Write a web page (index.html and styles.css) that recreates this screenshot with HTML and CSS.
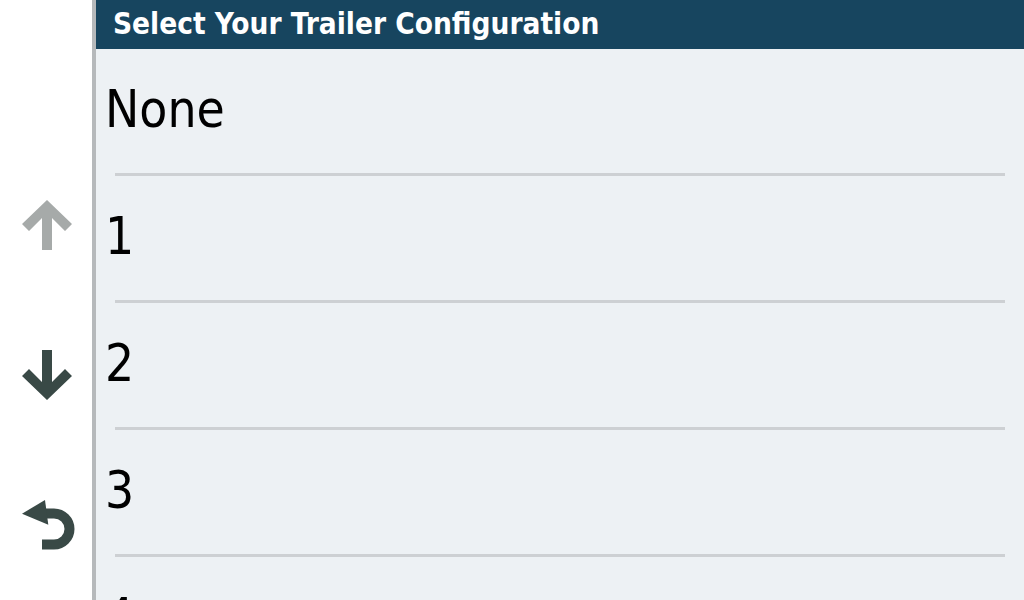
FILE: index.html
```html
<!DOCTYPE html>
<html>
<head>
<meta charset="utf-8">
<link rel="stylesheet" href="styles.css">
</head>
<body>
<div class="screen">
  <aside class="side">
    <svg class="icon" width="54" height="50" viewBox="0 0 54 50">
      <polygon class="up" points="25,0 50,24 43,31 30,18 30,50 20,50 20,18 7,31 0,24"/>
    </svg>
    <svg class="icon" width="54" height="50" viewBox="0 0 54 50">
      <polygon class="dark" points="25,50 50,26 43,19 30,32 30,0 20,0 20,32 7,19 0,26"/>
    </svg>
    <svg class="icon" width="54" height="50" viewBox="0 0 54 50">
      <path class="stroke" d="M20 44.5 H32 A15.5 15.5 0 0 0 32 13.5 H22"/>
      <polygon class="dark" points="0,13.7 23,0 26.3,24.7"/>
    </svg>
  </aside>
  <main class="main">
    <header class="title">Select Your Trailer Configuration</header>
    <ul class="list">
      <li class="item">None</li>
      <li class="item">1</li>
      <li class="item">2</li>
      <li class="item">3</li>
      <li class="item">4</li>
    </ul>
  </main>
</div>
</body>
</html>
```
FILE: styles.css
```css
html, body {
  margin: 0;
  padding: 0;
  width: 1024px;
  height: 600px;
  overflow: hidden;
  background: #ffffff;
}
.screen {
  display: flex;
  width: 1024px;
  height: 600px;
  font-family: "DejaVu Sans Condensed", "DejaVu Sans", sans-serif;
  font-stretch: condensed;
}
.side {
  flex: none;
  width: 96px;
  box-sizing: border-box;
  background: #ffffff;
  border-right: 4px solid #b6b9bb;
  display: flex;
  flex-direction: column;
  padding: 200px 0 0 22px;
  gap: 100px;
}
.icon {
  display: block;
}
.up { fill: #a6aaa9; }
.dark { fill: #394946; }
.stroke {
  fill: none;
  stroke: #394946;
  stroke-width: 10;
}
.main {
  flex: 1;
  background: #edf1f4;
  display: flex;
  flex-direction: column;
  overflow: hidden;
}
.title {
  flex: none;
  height: 49px;
  line-height: 49px;
  background: #17455f;
  color: #ffffff;
  font-weight: bold;
  font-size: 29.5px;
  padding-left: 17px;
  white-space: nowrap;
}
.list {
  list-style: none;
  margin: 0;
  padding: 0;
}
.item {
  font-size: 51px;
  line-height: 58px;
  color: #000000;
  padding: 32px 0 0 9px;
}
.item::after {
  content: "";
  display: block;
  height: 3px;
  background: #cdd0d3;
  margin: 34px 19px 0 10px;
}
```
